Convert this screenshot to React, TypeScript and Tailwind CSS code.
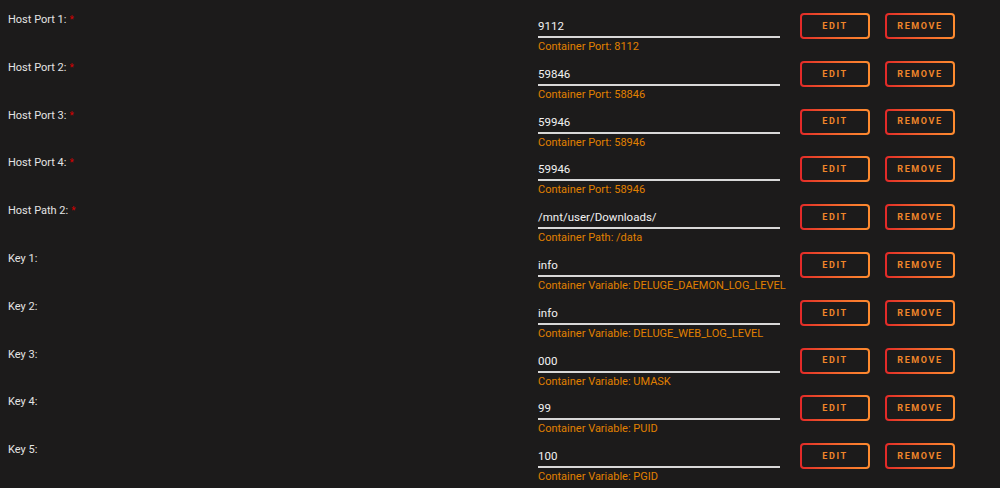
const rows = [
  { label: "Host Port 1:", req: true, value: "9112", desc: "Container Port: 8112" },
  { label: "Host Port 2:", req: true, value: "59846", desc: "Container Port: 58846" },
  { label: "Host Port 3:", req: true, value: "59946", desc: "Container Port: 58946" },
  { label: "Host Port 4:", req: true, value: "59946", desc: "Container Port: 58946" },
  { label: "Host Path 2:", req: true, value: "/mnt/user/Downloads/", desc: "Container Path: /data" },
  { label: "Key 1:", req: false, value: "info", desc: "Container Variable: DELUGE_DAEMON_LOG_LEVEL" },
  { label: "Key 2:", req: false, value: "info", desc: "Container Variable: DELUGE_WEB_LOG_LEVEL" },
  { label: "Key 3:", req: false, value: "000", desc: "Container Variable: UMASK" },
  { label: "Key 4:", req: false, value: "99", desc: "Container Variable: PUID" },
  { label: "Key 5:", req: false, value: "100", desc: "Container Variable: PGID" },
];

function GradientButton({ text }: { text: string }) {
  return (
    <div className="w-[70px] h-[26px] rounded-[4px] p-[2px] bg-gradient-to-r from-[#e22828] to-[#ff8c2f]">
      <button className="w-full h-full rounded-[2px] bg-[#1c1b1b] text-[#f0862a] text-[9px] font-bold tracking-[1.6px] uppercase flex items-center justify-center pt-[1px]">
        {text}
      </button>
    </div>
  );
}

export default function App() {
  return (
    <div
      className="min-h-screen w-full bg-[#1c1b1b] pt-[13px]"
      style={{ fontFamily: 'Roboto, "Noto Sans", sans-serif' }}
    >
      {rows.map((r, i) => (
        <div key={i} className="flex h-[47.8px] pl-[8px]">
          {/* label */}
          <div className="w-[530px] text-[11px] text-[#e4e4e4] leading-[14px]">
            {r.label}
            {r.req && <span className="text-[#d40000] ml-[3px] text-[10px] align-top">*</span>}
          </div>
          {/* input + description */}
          <div className="w-[242px] flex flex-col">
            <div className="h-[25px] border-b-2 border-[#d8d8d8] text-[11.5px] text-[#f2f2f2] leading-[26px]">
              {r.value}
            </div>
            <div className="text-[11px] text-[#e08000] leading-[14px] mt-[2px] whitespace-nowrap">{r.desc}</div>
          </div>
          <div className="flex gap-[15px] ml-[20px]">
            <GradientButton text="Edit" />
            <GradientButton text="Remove" />
          </div>
        </div>
      ))}
    </div>
  );
}
